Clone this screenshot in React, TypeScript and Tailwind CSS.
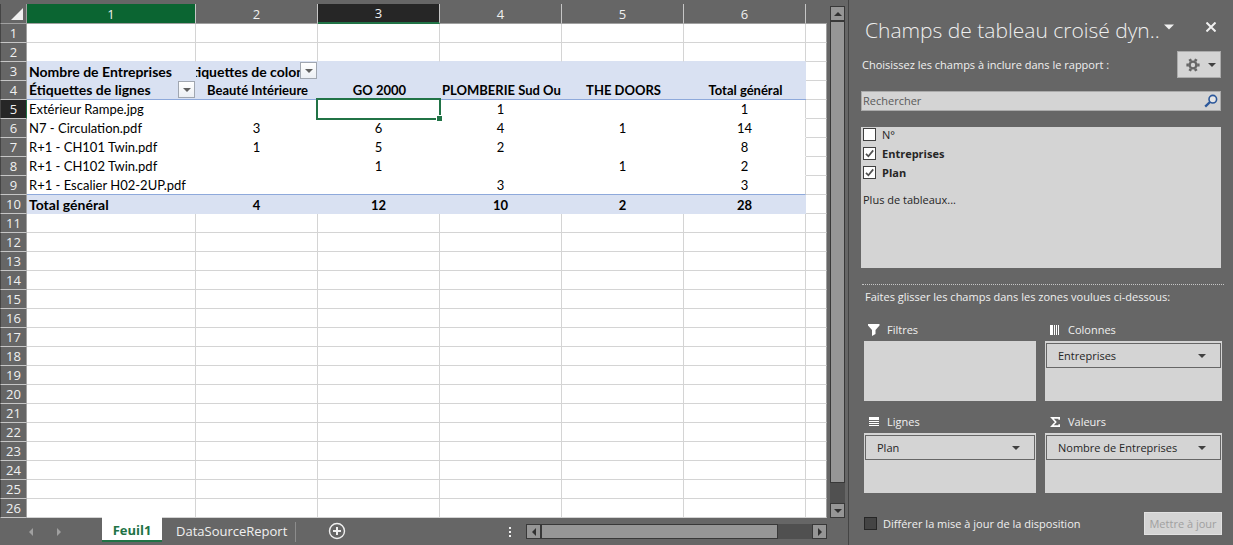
import { FC, ReactElement, ReactNode, useState } from "react";
import clsx from "clsx";

interface IPivotRow {
  label: string;
  values: (number | null)[];
}

interface IField {
  id: string;
  name: string;
  checked: boolean;
}

interface IZone {
  title: string;
  icon: ReactNode;
  item?: string;
}

const COLUMNS = [1, 2, 3, 4, 5, 6];
const PIVOT_HEADERS = [
  "Beauté Intérieure",
  "GO 2000",
  "PLOMBERIE Sud Ouest",
  "THE DOORS",
  "Total général",
];
const PIVOT_ROWS: IPivotRow[] = [
  { label: "Extérieur Rampe.jpg", values: [null, null, 1, null, 1] },
  { label: "N7 - Circulation.pdf", values: [3, 6, 4, 1, 14] },
  { label: "R+1 - CH101 Twin.pdf", values: [1, 5, 2, null, 8] },
  { label: "R+1 - CH102 Twin.pdf", values: [null, 1, null, 1, 2] },
  { label: "R+1 - Escalier H02-2UP.pdf", values: [null, null, 3, null, 3] },
];
const TOTALS = [4, 12, 10, 2, 28];
const EMPTY_ROWS = Array.from({ length: 16 }, (_, i) => i + 11);

const FIELDS: IField[] = [
  { id: "numero", name: "N°", checked: false },
  { id: "entreprises", name: "Entreprises", checked: true },
  { id: "plan", name: "Plan", checked: true },
];

type Direction = "up" | "down" | "left" | "right";

const ARROWS: Record<Direction, string> = {
  up: "M0 6 L4 2 L8 6 Z",
  down: "M0 2 L8 2 L4 6 Z",
  left: "M6 0 L2 4 L6 8 Z",
  right: "M2 0 L6 4 L2 8 Z",
};

const Arrow: FC<{ direction: Direction; className?: string }> = ({
  direction,
  className = "size-2",
}): ReactElement => (
  <svg viewBox="0 0 8 8" className={clsx("shrink-0", className)} fill="currentColor">
    <path d={ARROWS[direction]} />
  </svg>
);

const ScrollButton: FC<{ direction: Direction; label: string }> = ({
  direction,
  label,
}): ReactElement => (
  <button
    aria-label={label}
    className="flex size-[15px] shrink-0 items-center justify-center border border-[#383838] bg-[#969696] text-[#303030]"
  >
    <Arrow direction={direction} />
  </button>
);

const FilterButton: FC<{ label: string }> = ({ label }): ReactElement => (
  <button
    aria-label={label}
    className="absolute right-px top-0 flex h-[17px] w-[17px] items-center justify-center border border-[#a0a6b0] bg-linear-to-b from-white to-[#eceff4] text-[#606060]"
  >
    <Arrow direction="down" />
  </button>
);

const RowHeader: FC<{ row: number; active?: boolean }> = ({
  row,
  active = false,
}): ReactElement => (
  <th
    scope="row"
    className={clsx(
      "border-b border-l border-r border-b-[#c6c6c6] border-l-[#444444] p-0 text-center font-['Open_Sans',sans-serif] text-[13px] font-normal text-[#f0f0f0]",
      active ? "border-r-[#217346] bg-[#262626]" : "border-r-[#a0a0a0] bg-[#666666]"
    )}
  >
    {row}
  </th>
);

const EndCell: FC = (): ReactElement => (
  <td className="border-b border-r border-b-[#d4d4d4] border-r-[#a0a0a0] p-0" />
);

const EmptyRow: FC<{ row: number; beforePivot?: boolean }> = ({
  row,
  beforePivot = false,
}): ReactElement => (
  <tr className="h-[19px]">
    <RowHeader row={row} />
    {COLUMNS.map((column) => (
      <td
        key={column}
        className={clsx(
          "border-b border-r border-r-[#d4d4d4] p-0",
          beforePivot ? "border-b-[#d9e1f2]" : "border-b-[#d4d4d4]"
        )}
      />
    ))}
    <EndCell />
  </tr>
);

const Sheet: FC = (): ReactElement => (
  <table className="w-full table-fixed border-separate border-spacing-0 bg-white font-['Lato',sans-serif] text-[13px] leading-[18px] text-black">
    <colgroup>
      <col className="w-[27px]" />
      <col className="w-[169px]" />
      {PIVOT_HEADERS.map((header) => (
        <col key={header} className="w-[122px]" />
      ))}
      <col />
    </colgroup>
    <thead>
      <tr className="h-5 font-['Open_Sans',sans-serif] text-[13px] text-[#f0f0f0]">
        <th className="border-b border-l border-r border-b-[#a0a0a0] border-l-[#444444] border-r-[#a0a0a0] bg-[#666666] p-0">
          <button aria-label="Tout sélectionner" className="flex w-full justify-end pr-[3px]">
            <svg viewBox="0 0 12 12" className="size-3" fill="#f0f0f0">
              <path d="M12 0 V12 H0 Z" />
            </svg>
          </button>
        </th>
        {COLUMNS.map((column) => (
          <th
            key={column}
            scope="col"
            className={clsx(
              "border-r border-r-[#c6c6c6] p-0 text-center font-normal",
              column === 1 && "border-b border-b-[#a0a0a0] bg-[#0b6532]",
              column === 3 && "border-b-2 border-b-[#217346] bg-[#262626]",
              column !== 1 && column !== 3 && "border-b border-b-[#a0a0a0] bg-[#666666]"
            )}
          >
            {column}
          </th>
        ))}
        <th className="border-b border-b-[#a0a0a0] bg-[#666666] p-0" />
      </tr>
    </thead>
    <tbody>
      <EmptyRow row={1} />
      <EmptyRow row={2} beforePivot />
      <tr className="h-[19px] text-[14px] font-bold">
        <RowHeader row={3} />
        <td className="overflow-hidden bg-[#d9e1f2] p-0 pl-0.5 whitespace-nowrap">
          Nombre de Entreprises
        </td>
        <td className="relative bg-[#d9e1f2] p-0 pr-1">
          <div className="flex justify-center overflow-hidden whitespace-nowrap">
            <span className="shrink-0">Étiquettes de colonnes</span>
          </div>
          <FilterButton label="Filtrer les colonnes" />
        </td>
        <td colSpan={4} className="bg-[#d9e1f2] p-0" />
        <EndCell />
      </tr>
      <tr className="h-[19px] font-bold">
        <RowHeader row={4} />
        <td className="relative border-b border-[#8ea9db] bg-[#d9e1f2] p-0 pl-0.5 text-[14px] whitespace-nowrap">
          Étiquettes de lignes
          <FilterButton label="Filtrer les lignes" />
        </td>
        {PIVOT_HEADERS.map((header) => (
          <td
            key={header}
            className="border-b border-[#8ea9db] bg-[#d9e1f2] p-0 pr-px pl-0.5 whitespace-nowrap"
          >
            <div
              className={clsx(
                "overflow-hidden",
                header.length > 18 ? "text-left" : "text-center"
              )}
            >
              {header}
            </div>
          </td>
        ))}
        <EndCell />
      </tr>
      {PIVOT_ROWS.map((row, rowIndex) => (
        <tr key={row.label} className="h-[19px]">
          <RowHeader row={rowIndex + 5} active={rowIndex === 0} />
          <td
            className={clsx(
              "border-b p-0 pl-0.5 whitespace-nowrap",
              rowIndex === 4 ? "border-[#8ea9db]" : "border-white"
            )}
          >
            {row.label}
          </td>
          {row.values.map((value, index) => (
            <td
              key={PIVOT_HEADERS[index]}
              className={clsx(
                "relative border-b p-0 text-center",
                rowIndex === 4 ? "border-b-[#8ea9db]" : "border-b-white",
                index === 4 ? "border-r border-r-[#d4d4d4]" : "pr-px"
              )}
            >
              {value}
              {rowIndex === 0 && index === 1 && (
                <div className="absolute -left-0.5 -top-0.5 -right-px -bottom-0.5 z-10 border-2 border-[#217346]">
                  <span className="absolute -right-[3px] -bottom-[3px] size-1.5 border-l border-t border-white bg-[#217346]" />
                </div>
              )}
            </td>
          ))}
          <EndCell />
        </tr>
      ))}
      <tr className="h-[19px] font-bold">
        <RowHeader row={10} />
        <td className="bg-[#d9e1f2] p-0 pl-0.5 text-[14px]">Total général</td>
        {TOTALS.map((total) => (
          <td key={total} className="bg-[#d9e1f2] p-0 pr-px text-center">
            {total}
          </td>
        ))}
        <EndCell />
      </tr>
      {EMPTY_ROWS.map((row) => (
        <EmptyRow key={row} row={row} />
      ))}
    </tbody>
  </table>
);

const SheetTabs: FC = (): ReactElement => (
  <div className="flex h-[27px] items-start pr-[21px]">
    <div className="flex w-[102px] shrink-0 items-center gap-5 self-stretch pl-[27px] text-[#a0a0a0]">
      <button aria-label="Feuille précédente">
        <Arrow direction="left" />
      </button>
      <button aria-label="Feuille suivante">
        <Arrow direction="right" />
      </button>
    </div>
    <button className="-mt-px h-[25px] w-[60px] border-b-2 border-[#217346] bg-white pt-0.5 text-[13px] leading-5 font-bold text-[#217346]">
      Feuil1
    </button>
    <button className="h-6 pt-0.5 pl-3.5 text-[13px] leading-5 text-[#f0f0f0]">
      DataSourceReport
    </button>
    <div className="mt-1 ml-2 h-5 border-l border-[#8c8c8c]" />
    <button aria-label="Nouvelle feuille" className="mt-1 ml-8 text-[#f0f0f0]">
      <svg viewBox="0 0 18 18" className="size-[18px]" fill="none" stroke="currentColor">
        <circle cx="9" cy="9" r="7.5" strokeWidth="1.4" />
        <path d="M9 5 V13 M5 9 H13" strokeWidth="2" />
      </svg>
    </button>
    <div className="ml-auto flex items-center gap-[15px] pt-1.5">
      <svg viewBox="0 0 2 10" className="h-2.5 w-0.5" fill="#f0f0f0">
        <path d="M0 0h2v2H0z M0 4h2v2H0z M0 8h2v2H0z" />
      </svg>
      <div className="flex w-[301px] bg-[#505050]">
        <ScrollButton direction="left" label="Défiler à gauche" />
        <div className="h-[15px] w-[237px] border border-[#383838] bg-[#969696]" />
        <div className="flex-1" />
        <ScrollButton direction="right" label="Défiler à droite" />
      </div>
    </div>
  </div>
);

const ZoneBox: FC<{ zone: IZone }> = ({ zone }): ReactElement => (
  <section>
    <h3 className="flex h-6 items-center gap-[5px] pt-px pl-1">
      <span className="flex w-3.5 justify-start">{zone.icon}</span>
      <span>{zone.title}</span>
    </h3>
    <div className="h-[60px] bg-[#d4d4d4] px-px pt-0.5">
      {zone.item && (
        <button className="flex h-[25px] w-full items-center justify-between border border-[#666666] pl-[11px] pr-3.5 text-[#262626]">
          {zone.item}
          <Arrow direction="down" className="size-2 text-[#404040]" />
        </button>
      )}
    </div>
  </section>
);

const ZONES: IZone[] = [
  {
    title: "Filtres",
    icon: (
      <svg viewBox="0 0 12 12" className="size-3" fill="white">
        <path d="M0 0 H11.5 V1.5 L7.5 6 V10 L4 12 V6 L0 1.5 Z" />
      </svg>
    ),
  },
  {
    title: "Colonnes",
    item: "Entreprises",
    icon: (
      <svg viewBox="0 0 12 10" className="h-2.5 w-3" fill="white">
        <path d="M1 0h3v10H1z M5 0h1v10H5z M7 0h1v10H7z M9 0h1v10H9z" />
      </svg>
    ),
  },
  {
    title: "Lignes",
    item: "Plan",
    icon: (
      <svg viewBox="0 0 12 10" className="h-2.5 w-3" fill="white">
        <path d="M1 0h10v3H1z M1 4h10v1H1z M1 6h10v1H1z M1 8h10v1H1z" />
      </svg>
    ),
  },
  {
    title: "Valeurs",
    item: "Nombre de Entreprises",
    icon: (
      <svg viewBox="0 0 12 10" className="h-2.5 w-3" fill="none" stroke="white" strokeWidth="1.6">
        <path d="M10.2 2.8 V0.9 H2.9 L6.7 5 L2.9 9.1 H10.2 V7.2" />
      </svg>
    ),
  },
];

const FieldsPane: FC = (): ReactElement => {
  const [fields, setFields] = useState<IField[]>(FIELDS);

  const toggleField = (id: string) => {
    setFields(
      fields.map((field) =>
        field.id === id ? { ...field, checked: !field.checked } : field
      )
    );
  };

  return (
    <aside className="w-[384px] shrink-0 pl-3 pr-3 text-[11px] leading-4 text-[#f0f0f0]">
      <div className="flex pt-4">
        <h2 className="w-[300px] pl-1 text-[21px] leading-7 font-light whitespace-nowrap">
          Champs de tableau croisé dyn..
        </h2>
        <button aria-label="Options du volet" className="mt-1.5 ml-[3px] h-2.5">
          <Arrow direction="down" className="size-2.5" />
        </button>
        <button aria-label="Fermer" className="mt-1.5 mr-[5px] ml-auto h-2.5">
          <svg viewBox="0 0 10 10" className="size-2.5" fill="none" stroke="currentColor" strokeWidth="2">
            <path d="M0.5 0.5 L9.5 9.5 M9.5 0.5 L0.5 9.5" />
          </svg>
        </button>
      </div>

      <div className="mt-[7px] flex items-center justify-between pl-px">
        <p>Choisissez les champs à inclure dans le rapport :</p>
        <button
          aria-label="Outils"
          className="flex h-[27px] w-11 items-center justify-between border border-[#ababab] bg-[#d4d4d4] pr-1 pl-2 text-[#404040]"
        >
          <svg viewBox="0 0 14 14" className="size-3.5" fill="none" stroke="#666666">
            <circle cx="7" cy="7" r="3.4" strokeWidth="2.4" />
            <path
              d="M4.8 3.2 L3.7 1.2 M9.2 3.2 L10.3 1.2 M11.2 7 H13.6 M9.2 10.8 L10.3 12.8 M4.8 10.8 L3.7 12.8 M2.8 7 H0.4"
              strokeWidth="2.8"
            />
          </svg>
          <Arrow direction="down" />
        </button>
      </div>

      <div className="mt-[13px] flex h-5 items-center border border-[#ababab] bg-[#d4d4d4] pr-0.5 pl-px">
        <input
          type="text"
          aria-label="Rechercher"
          placeholder="Rechercher"
          className="h-4 min-w-0 flex-1 text-[#262626] outline-none placeholder:text-[#5a5a5a]"
        />
        <svg viewBox="0 0 14 14" className="size-3.5" fill="none" stroke="#2b579a">
          <circle cx="8.8" cy="5.2" r="3.8" fill="#e6e6e6" strokeWidth="1.6" />
          <path d="M6 8 L1.2 12.6" strokeWidth="2.4" />
        </svg>
      </div>

      <div className="mt-4 h-[141px] bg-[#d4d4d4] pt-px pl-0.5 text-[#262626]">
        {fields.map((field) => (
          <label
            key={field.id}
            className={clsx(
              "mb-[3px] flex h-4 items-start gap-1.5",
              field.checked && "font-bold"
            )}
          >
            <span className="relative size-[13px]">
              <input
                type="checkbox"
                checked={field.checked}
                onChange={() => toggleField(field.id)}
                className="block size-[13px] appearance-none border border-[#404040] bg-white"
              />
              {field.checked && (
                <svg
                  viewBox="0 0 13 13"
                  className="pointer-events-none absolute inset-0 size-[13px]"
                  fill="none"
                  stroke="#505050"
                  strokeWidth="1.7"
                >
                  <path d="M3 6.8 L5.4 9.3 L10.2 3.4" />
                </svg>
              )}
            </span>
            <span className="leading-[14px]">{field.name}</span>
          </label>
        ))}
        <a href="#tableaux" className="mt-2.5 block">
          Plus de tableaux...
        </a>
      </div>

      <hr className="mt-4 -mr-[3px] ml-px border-t border-dotted border-[#c6c6c6]" />
      <p className="mt-1 pl-1">Faites glisser les champs dans les zones voulues ci-dessous:</p>

      <div className="-mr-px mt-3 grid grid-cols-[172fr_177fr] gap-x-[9px] gap-y-2 pl-[3px]">
        {ZONES.map((zone) => (
          <ZoneBox key={zone.title} zone={zone} />
        ))}
      </div>

      <div className="-mr-px mt-[19px] flex items-center pl-[3px]">
        <label className="flex items-center gap-1.5">
          <input
            type="checkbox"
            className="size-[13px] appearance-none border border-[#262626] bg-[#444444] checked:bg-white"
          />
          Différer la mise à jour de la disposition
        </label>
        <button
          disabled
          className="ml-auto h-[23px] w-[78px] border border-[#e1e1e1] bg-[#d4d4d4] whitespace-nowrap text-[#a0a0a0]"
        >
          Mettre à jour
        </button>
      </div>
    </aside>
  );
};

const App: FC = (): ReactElement => {
  return (
    <div className="flex min-h-screen bg-[#666666] font-['Open_Sans',sans-serif]">
      <main className="min-w-0 flex-1 border-r border-[#444444]">
        <div className="flex gap-[3px] pr-[3px]">
          <div className="min-w-0 flex-1 pt-1">
            <Sheet />
          </div>
          <div className="mt-1.5 flex w-[15px] flex-col bg-[#505050]">
            <ScrollButton direction="up" label="Défiler vers le haut" />
            <div className="flex-1 border border-[#383838] bg-[#969696]" />
            <div className="h-5" />
            <ScrollButton direction="down" label="Défiler vers le bas" />
          </div>
        </div>
        <SheetTabs />
      </main>
      <FieldsPane />
    </div>
  );
};

export default App;
